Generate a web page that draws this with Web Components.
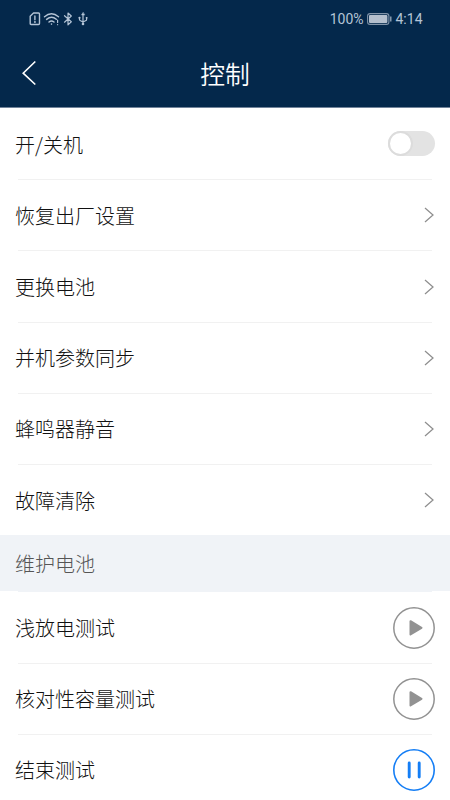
<!DOCTYPE html>
<html lang="zh-CN">
<head>
<meta charset="utf-8">
<title>控制</title>
<style>
html,body{margin:0;height:100%;overflow:hidden;background:#fff;font-family:"Noto Sans CJK SC",sans-serif;font-weight:300}
</style>
</head>
<body>
<control-screen></control-screen>
<script>
const define = (name, html) => customElements.define(name, class extends HTMLElement {
  constructor() {
    super();
    const t = document.createElement('template');
    t.innerHTML = html;
    this.attachShadow({mode: 'open'}).append(t.content.cloneNode(true));
  }
});

define('status-bar', `<style>
:host{display:flex;justify-content:space-between;align-items:center;height:38px;padding:0 27.5px 0 29px;box-sizing:border-box;color:#b4c4d6;font:400 14px/38px Roboto,sans-serif}
.r{display:flex;align-items:center}
svg{display:block}
.b{margin:0 4px 0 3px}
</style>
<svg width="60" height="16" viewBox="0 0 60 16" fill="none" stroke="#b4c4d6" stroke-width="1.2" stroke-linecap="round" stroke-linejoin="round">
<path d="M4.5 2H9.5Q10.5 2 10.5 3V12.5Q10.5 13.5 9.5 13.5H2.2Q1.2 13.5 1.2 12.5V5.2ZM5.9 5V8.7" stroke-width="1.4"/><circle cx="5.9" cy="11" r=".4"/>
<path d="M15.5 5.7Q22.5-.1 29.5 5.7M17.6 8.4Q22.5 4.2 27.3 8.2M20 11Q22.5 8.8 25 11" stroke-width="1.4"/><circle cx="22.5" cy="13.1" r=".8" fill="#b4c4d6" stroke="none"/><path d="M28.6 9V11.5M28.6 13.6V13.7"/>
<path d="M35.5 4.7L42.3 10.8 39 13.9V2L42.3 5 35.5 11.2"/>
<path d="M54 3.6V13M50.5 6.5V8.6Q50.5 9.5 51.5 9.8L54 11 56.5 9.8Q57.6 9.3 57.6 8.4V6.5"/><path d="M54 1.6L52.5 4H55.5Z" fill="#b4c4d6" stroke-width=".5"/><circle cx="54" cy="13" r="1.3" fill="#b4c4d6" stroke="none"/><circle cx="50.5" cy="6.8" r="1.1" fill="#b4c4d6" stroke="none"/><path d="M56.8 6H58.4V7.5H56.8Z" fill="#b4c4d6" stroke="none"/>
</svg>
<div class="r"><span>100%</span>
<svg class="b" width="25" height="12" viewBox="0 0 25 12"><rect x=".6" y=".6" width="21.3" height="10.8" rx="2.5" fill="none" stroke="#8093a8" stroke-width="1.1"/><rect x="2" y="2" width="18.4" height="8" rx="1" fill="#b4bfcd"/><path d="M23.8 3.5V8.5" stroke="#9aabbd" stroke-width="1.3"/></svg>
<span>4:14</span></div>`);

define('nav-bar', `<style>
:host{display:grid;grid-template-columns:60px 1fr 60px;align-items:center;height:69px;color:#fff;font-size:24.8px;font-weight:350;line-height:36px}
.t{text-align:center}
svg{display:block;margin-left:21px}
</style>
<svg width="16" height="26" viewBox="0 0 16 26" fill="none" stroke="#fff" stroke-width="1.6"><path d="M14.3 1.5L2.2 13.2 14.3 24.5"/></svg>
<div class="t"><slot></slot></div>`);

define('list-row', `<style>
:host{display:flex;flex-direction:column;height:71.22px;color:#111;font-size:20px;line-height:30px}
.m{flex:1;display:flex;align-items:center;justify-content:space-between;padding:0 15px}
.d{height:1px;margin:0 18px;background:#f1f1f1}
span{padding-top:1px}
:host([first]) .d{background:none}
:host([after-title]) .d{background:#f0f3f7}
</style><div class="d"></div><div class="m"><span><slot></slot></span><slot name="end"></slot></div>`);

define('section-title', `<style>
:host{display:flex;align-items:center;height:56.1px;padding:0 15px;background:#f0f3f7;color:#555;font-size:20px;line-height:30px}
span{padding-top:1px}
</style><span><slot></slot></span>`);

define('toggle-switch', `<style>
:host{display:block;width:47px;height:25px;margin-bottom:2px;border-radius:13px;background:#e3e3e3}
i{display:block;box-sizing:border-box;width:25px;height:25px;border:2px solid #dcdcdc;border-radius:50%;background:#fff}
</style><i></i>`);

define('chevron-icon', `<style>:host{display:block}svg{display:block}</style>
<svg width="12" height="16" viewBox="0 0 12 16" fill="none" stroke="#8e8e8e" stroke-width="1.25"><path d="M2 1L10 8 2 15"/></svg>`);

define('play-icon', `<style>:host{display:block}svg{display:block}</style>
<svg width="42" height="42" viewBox="0 0 42 42"><circle cx="21" cy="21" r="20.2" fill="none" stroke="#929292" stroke-width="1.5"/><path d="M17.5 14.2L28.5 20.8 17.5 27.4Z" fill="#929292" stroke="#929292" stroke-width="2" stroke-linejoin="round"/></svg>`);

define('pause-icon', `<style>:host{display:block}svg{display:block}</style>
<svg width="42" height="42" viewBox="0 0 42 42" fill="none" stroke="#157ef5"><circle cx="21" cy="21" r="20.2" stroke-width="1.6"/><path d="M16.2 14V28M26.2 14V28" stroke-width="2.9" stroke-linecap="round"/></svg>`);

define('control-screen', `<style>
:host{display:block;height:800px;overflow:hidden}
header{height:107px;background:#04284b;border-bottom:1px solid #71839a;box-sizing:content-box}
</style>
<header><status-bar></status-bar><nav-bar>控制</nav-bar></header>
<main>
<list-row first>开/关机<toggle-switch slot="end"></toggle-switch></list-row>
<list-row>恢复出厂设置<chevron-icon slot="end"></chevron-icon></list-row>
<list-row>更换电池<chevron-icon slot="end"></chevron-icon></list-row>
<list-row>并机参数同步<chevron-icon slot="end"></chevron-icon></list-row>
<list-row>蜂鸣器静音<chevron-icon slot="end"></chevron-icon></list-row>
<list-row>故障清除<chevron-icon slot="end"></chevron-icon></list-row>
<section-title>维护电池</section-title>
<list-row after-title>浅放电测试<play-icon slot="end"></play-icon></list-row>
<list-row>核对性容量测试<play-icon slot="end"></play-icon></list-row>
<list-row>结束测试<pause-icon slot="end"></pause-icon></list-row>
</main>`);
</script>
</body>
</html>
